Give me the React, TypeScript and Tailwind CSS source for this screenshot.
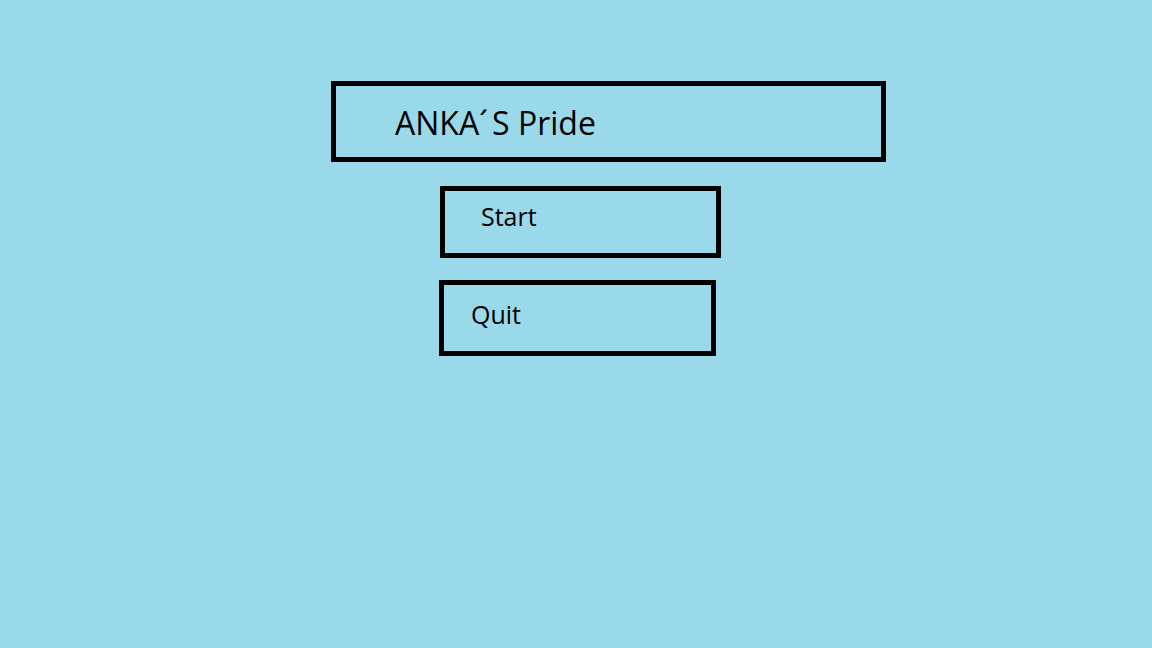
const font = { fontFamily: '"Comic Sans MS", "Open Sans", sans-serif' };

const App = () => {
  return (
    <div
      className="w-[1152px] h-[648px] bg-[#99d9ea] text-black flex flex-col items-start overflow-hidden"
      style={font}
    >
      <div className="ml-[331px] mt-[81px] w-[555px] h-[81px] border-[5px] border-black pl-[59px] pt-[21px]">
        <h1 className="text-[32px] leading-[32px] font-normal">
          ANKA<span className="mr-[4px]">´</span>S Pride
        </h1>
      </div>

      <button className="ml-[440px] mt-[24px] w-[281px] h-[72px] border-[5px] border-black pl-[36px] pt-[13px] text-left flex items-start">
        <span className="text-[25px] leading-[25px]">Start</span>
      </button>

      <button className="ml-[439px] mt-[22px] w-[277px] h-[76px] border-[5px] border-black pl-[27px] pt-[17px] text-left flex items-start">
        <span className="text-[25px] leading-[25px]">Quit</span>
      </button>
    </div>
  );
};

export default App;
